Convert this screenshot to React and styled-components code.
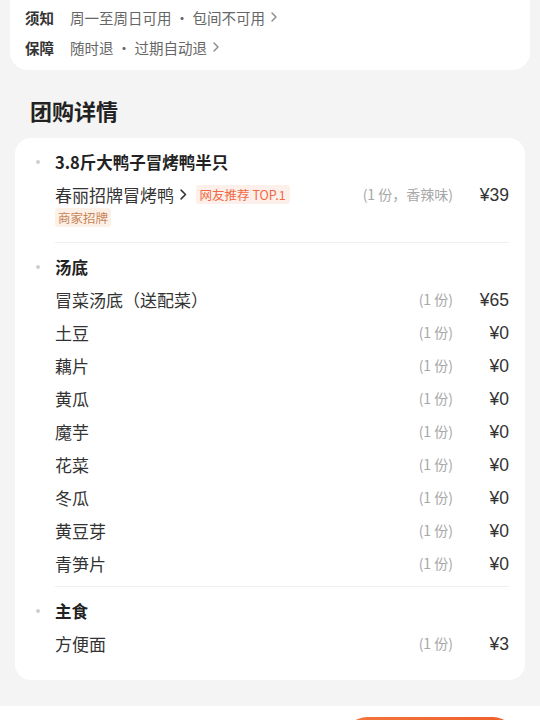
import React from "react";
import styled, { createGlobalStyle } from "styled-components";

const GlobalStyle = createGlobalStyle`
  html, body {
    margin: 0;
    padding: 0;
    background: #f4f4f4;
    font-family: "Noto Sans CJK SC", "Noto Sans", sans-serif;
    -webkit-font-smoothing: antialiased;
  }
`;

const notices = [
  { label: "须知", value: "周一至周日可用 · 包间不可用" },
  { label: "保障", value: "随时退 · 过期自动退" },
];

const sections = [
  {
    title: "3.8斤大鸭子冒烤鸭半只",
    items: [
      {
        name: "春丽招牌冒烤鸭",
        link: true,
        hot: "网友推荐 TOP.1",
        tags: ["商家招牌"],
        qty: "(1 份，香辣味)",
        price: "¥39",
      },
    ],
  },
  {
    title: "汤底",
    items: [
      { name: "冒菜汤底（送配菜）", qty: "(1 份)", price: "¥65" },
      { name: "土豆", qty: "(1 份)", price: "¥0" },
      { name: "藕片", qty: "(1 份)", price: "¥0" },
      { name: "黄瓜", qty: "(1 份)", price: "¥0" },
      { name: "魔芋", qty: "(1 份)", price: "¥0" },
      { name: "花菜", qty: "(1 份)", price: "¥0" },
      { name: "冬瓜", qty: "(1 份)", price: "¥0" },
      { name: "黄豆芽", qty: "(1 份)", price: "¥0" },
      { name: "青笋片", qty: "(1 份)", price: "¥0" },
    ],
  },
  {
    title: "主食",
    items: [{ name: "方便面", qty: "(1 份)", price: "¥3" }],
  },
];

const Page = styled.div`
  width: 540px;
  height: 720px;
  overflow: hidden;
  display: flex;
  flex-direction: column;
`;

const NoticeCard = styled.div`
  margin: 0 10px;
  padding: 2px 15px 8px;
  background: #fff;
  border-radius: 0 0 18px 18px;
`;

const NoticeRow = styled.div`
  display: flex;
  align-items: center;
  height: 30px;
  font-size: 14.5px;
`;

const NoticeLabel = styled.span`
  width: 45px;
  color: #333;
  font-weight: 600;
`;

const NoticeValue = styled.span`
  display: flex;
  align-items: center;
  gap: 4px;
  color: #666;
`;

const Heading = styled.h2`
  margin: 25px 0 13px 30px;
  height: 30px;
  line-height: 30px;
  font-size: 22px;
  font-weight: 700;
  color: #222;
`;

const DetailCard = styled.div`
  margin: 0 15px;
  padding: 0 16px 14px 40px;
  background: #fff;
  border-radius: 16px;
`;

const Section = styled.div`
  padding: 9px 0 7px;
  border-top: ${(p) => (p.$first ? "none" : "1px solid #eeeeee")};
`;

const SectionTitle = styled.div`
  display: flex;
  align-items: center;
  height: 30px;
  font-size: 16.5px;
  font-weight: 700;
  color: #222;
`;

const Dot = styled.span`
  width: 4px;
  height: 4px;
  border-radius: 50%;
  background: #cfcfcf;
  margin-left: -19px;
  margin-right: 15px;
`;

const ItemRow = styled.div`
  display: flex;
  align-items: flex-start;
`;

const ItemMain = styled.div`
  flex: 1;
  min-width: 0;
`;

const NameLine = styled.div`
  display: flex;
  align-items: center;
  height: 33px;
  padding-top: 1px;
  box-sizing: border-box;
  font-size: 17px;
  color: #333;
`;

const Chevron = styled.svg`
  margin-left: ${(p) => p.$gap || 4}px;
  flex-shrink: 0;
`;

const HotTag = styled.span`
  margin-left: 9px;
  padding: 0 4px;
  height: 19px;
  line-height: 19px;
  font-size: 12.5px;
  color: #f06a45;
  background: #fdefea;
  border-radius: 3px;
`;

const TagLine = styled.div`
  display: flex;
  gap: 6px;
  margin: -2px 0 8px;
`;

const Tag = styled.span`
  padding: 0 3px;
  height: 19px;
  line-height: 19px;
  font-size: 12.5px;
  color: #c88458;
  background: #fdf1e7;
  border-radius: 3px;
`;

const Qty = styled.div`
  height: 33px;
  line-height: 35px;
  font-size: 14px;
  color: #a8a8a8;
  white-space: nowrap;
`;

const Price = styled.div`
  width: 56px;
  height: 33px;
  line-height: 36px;
  text-align: right;
  font-family: "Liberation Sans", "Noto Sans", sans-serif;
  font-size: 17.5px;
  color: #333;
`;

const BottomBar = styled.div`
  margin-top: 26px;
  flex: 1;
  display: flex;
  justify-content: flex-end;
  padding: 11px 25px 0 0;
  background: #fff;
`;

const BuyButton = styled.div`
  width: 170px;
  height: 44px;
  flex-shrink: 0;
  border-radius: 22px;
  background: linear-gradient(90deg, #f2763d, #ef5f2c);
`;

const ChevronIcon = ({ color = "#999", size = 10, gap }) => (
  <Chevron $gap={gap} width={size * 0.6} height={size} viewBox="0 0 6 10">
    <path
      d="M1 1 L5 5 L1 9"
      fill="none"
      stroke={color}
      strokeWidth="1.4"
      strokeLinecap="round"
      strokeLinejoin="round"
    />
  </Chevron>
);

const App = () => (
  <>
    <GlobalStyle />
    <Page>
      <NoticeCard>
        {notices.map((n) => (
          <NoticeRow key={n.label}>
            <NoticeLabel>{n.label}</NoticeLabel>
            <NoticeValue>
              {n.value}
              <ChevronIcon color="#888" size={10} gap={2} />
            </NoticeValue>
          </NoticeRow>
        ))}
      </NoticeCard>

      <Heading>团购详情</Heading>

      <DetailCard>
        {sections.map((s, i) => (
          <Section key={s.title} $first={i === 0}>
            <SectionTitle>
              <Dot />
              {s.title}
            </SectionTitle>
            {s.items.map((it) => (
              <ItemRow key={it.name}>
                <ItemMain>
                  <NameLine>
                    {it.name}
                    {it.link && <ChevronIcon color="#333" size={11} gap={6} />}
                    {it.hot && <HotTag>{it.hot}</HotTag>}
                  </NameLine>
                  {it.tags && (
                    <TagLine>
                      {it.tags.map((t) => (
                        <Tag key={t}>{t}</Tag>
                      ))}
                    </TagLine>
                  )}
                </ItemMain>
                <Qty>{it.qty}</Qty>
                <Price>{it.price}</Price>
              </ItemRow>
            ))}
          </Section>
        ))}
      </DetailCard>

      <BottomBar>
        <BuyButton />
      </BottomBar>
    </Page>
  </>
);

export default App;
